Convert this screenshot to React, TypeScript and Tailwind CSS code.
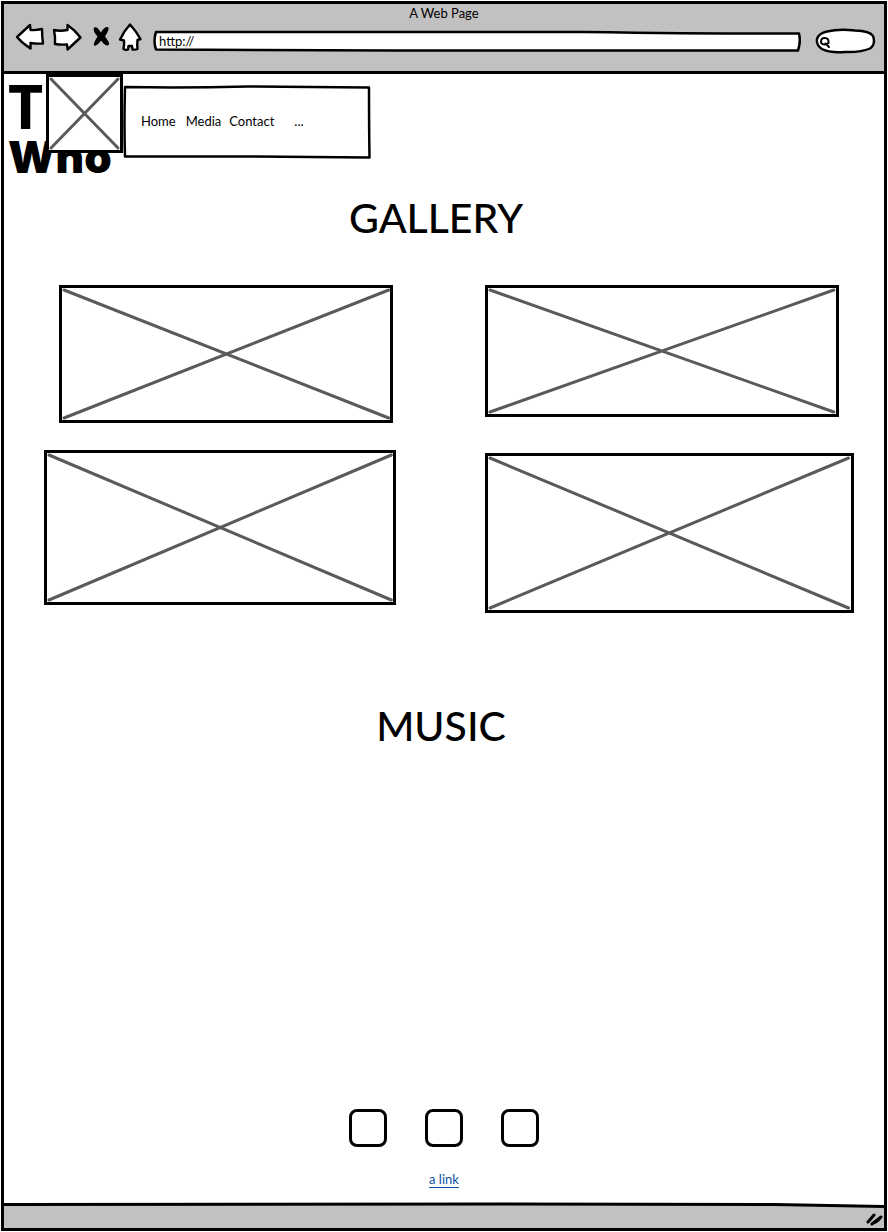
import type { ReactNode } from 'react';

function Sketch({ viewBox, className, children }: { viewBox: string; className: string; children: ReactNode }) {
  return (
    <svg
      viewBox={viewBox}
      className={className}
      fill="white"
      stroke="black"
      strokeWidth="2.4"
      strokeLinejoin="round"
      strokeLinecap="round"
      aria-hidden="true"
    >
      {children}
    </svg>
  );
}

function ImagePlaceholder({ className, label }: { className: string; label: string }) {
  return (
    <div role="img" aria-label={label} className={`border-[3px] border-black bg-white p-0.5 ${className}`}>
      <svg viewBox="0 0 100 100" preserveAspectRatio="none" className="block size-full overflow-visible" aria-hidden="true">
        <path
          d="M0 0 L100 100 M100 0 L0 100"
          stroke="#5a5a5a"
          strokeWidth="3"
          strokeLinecap="round"
          fill="none"
          vectorEffect="non-scaling-stroke"
        />
      </svg>
    </div>
  );
}

function BrowserBar() {
  return (
    <header className="h-[70px] shrink-0 border-b-[3px] border-black bg-[#c1c1c1]">
      <p className="text-center text-[13px] leading-[19px]">A Web Page</p>
      <div className="flex items-start pr-2 pl-3">
        <div className="flex shrink-0 items-center gap-2">
          <button type="button" aria-label="Back" className="h-7 w-7">
            <Sketch viewBox="0 0 28 28" className="h-7 w-7 overflow-visible">
              <path d="M1 14 L14 2 L14.500 7 Q20 7.500 26 6 Q26 12 27 20.500 Q20 21 14.500 20 L14.500 25.500 Q6 20 1 14 Z" />
            </Sketch>
          </button>
          <button type="button" aria-label="Forward" className="h-7 w-7">
            <Sketch viewBox="0 0 28 28" className="h-7 w-7 overflow-visible">
              <path d="M2 7 Q8 8.500 15.500 7 L15.500 2 Q23 7 28.500 14.500 L15.500 26.500 L15 21.500 Q9 22 3 21 Q3.500 14 2 7 Z" />
            </Sketch>
          </button>
          <button type="button" aria-label="Stop" className="h-7 w-6">
            <Sketch viewBox="0 0 24 28" className="h-7 w-6 overflow-visible">
              <path stroke="none" fill="black" d="M6 4.500 Q9 3 13 9.500 Q16 3.500 20 4 Q22 6 17 13.500 Q22 20 21 21.500 Q18 24.500 13 17.500 Q9 23.500 6 22.500 Q5 20.500 9.500 13.500 Q4.500 8 6 4.500 Z" />
            </Sketch>
          </button>
          <button type="button" aria-label="Home" className="h-7 w-6">
            <Sketch viewBox="0 0 24 28" className="h-7 w-6 overflow-visible">
              <path d="M10 1.500 Q16 8 20.500 16 L17.500 17 Q17 22 17.500 26 Q15 27 12.500 26.500 L12 23 H8.500 L8 26.500 Q6 27.500 3.500 26 Q4.500 21 4 17.500 L0 16.500 Q4 8 10 1.500 Z" />
            </Sketch>
          </button>
        </div>
        <div className="relative mt-[7px] ml-[9px] flex h-[22px] min-w-0 grow items-center">
          <svg viewBox="0 0 646 22" preserveAspectRatio="none" className="absolute inset-0 size-full" aria-hidden="true">
            <path
              d="M3 2 Q250 2.500 430 2 Q560 4 644 3.500 Q646 12 643 20.500 L240 20.500 L3 19.500 Q0 11 3 2 Z"
              fill="white"
              stroke="black"
              strokeWidth="2.500"
              strokeLinejoin="round"
            />
          </svg>
          <input
            type="text"
            aria-label="Address"
            defaultValue="http://"
            className="relative w-full bg-transparent px-1.5 text-[13px] leading-5 outline-none"
          />
        </div>
        <div className="relative mt-[5px] ml-3.5 flex h-[26px] w-[61px] shrink-0 items-center">
          <svg viewBox="0 0 61 26" className="absolute inset-0 size-full" aria-hidden="true">
            <path
              d="M12 3.500 Q24 0.500 40 2.500 Q55 3 58 8 Q61 16 55 20.500 Q46 24.500 30 24 Q14 25 7 21 Q1 17 2 11 Q4 5 12 3.500 Z"
              fill="white"
              stroke="black"
              strokeWidth="2.400"
            />
            <path
              d="M6 14 Q6 9.500 10 10 Q14 10 13.500 15 Q10 17.500 7.500 16 Q6 15.500 6 14 M10.500 15.500 L14 19"
              fill="none"
              stroke="black"
              strokeWidth="2"
              strokeLinecap="round"
            />
          </svg>
          <input type="search" aria-label="Search" className="relative ml-4 w-9 bg-transparent text-[13px] outline-none" />
        </div>
      </div>
    </header>
  );
}

function SiteHeader() {
  return (
    <div className="flex h-[104px] items-start">
      <div className="relative w-[119px] shrink-0 pt-1.5 pl-1">
        <h1>
          <span className="block font-['Noto_Sans',sans-serif] text-[61px] leading-[52px] font-bold">The</span>
          <span className="block font-[Inter,sans-serif] text-[44px] leading-[50px] font-black">Who</span>
        </h1>
        <ImagePlaceholder label="Band picture" className="absolute top-0 left-[42px] h-[79px] w-[77px]" />
      </div>
      <nav className="relative mt-[11px] h-[74px] w-[248px] text-[13px] leading-5">
        <svg viewBox="0 0 248 74" preserveAspectRatio="none" className="absolute inset-0 size-full" aria-hidden="true">
          <path
            d="M2 2 Q60 3 125 1.500 L246 2.500 Q246 40 246.500 72.500 L125 71.500 L2 71.500 Q1 40 2 2 Z"
            fill="white"
            stroke="black"
            strokeWidth="2.500"
            strokeLinejoin="round"
          />
        </svg>
        <div className="relative flex px-[18px] pt-[26px]">
          <a href="#home">Home</a>
          <a href="#gallery" className="ml-2.5">Media</a>
          <a href="#contact" className="ml-2">Contact</a>
          <a href="#more" className="ml-5">...</a>
        </div>
      </nav>
    </div>
  );
}

export default function App() {
  return (
    <div className="flex min-h-screen flex-col bg-white p-px font-[Lato,sans-serif] text-black">
      <div className="flex grow flex-col border-[3px] border-black">
        <BrowserBar />
        <main className="flex grow flex-col">
          <SiteHeader />
          <section id="gallery">
            <h2 className="pt-4 pr-4 text-center text-[41px] leading-[48px] font-medium">GALLERY</h2>
            <div className="mt-[43px] flex items-start pr-[30px] pl-10">
              <div className="flex w-[43.500%] flex-col items-end gap-[27px]">
                <ImagePlaceholder label="Gallery picture 1" className="mr-[3px] h-[138px] w-[95%]" />
                <ImagePlaceholder label="Gallery picture 2" className="h-[155px] w-full" />
              </div>
              <div className="ml-auto flex w-[45.500%] flex-col items-start gap-9">
                <ImagePlaceholder label="Gallery picture 3" className="h-[132px] w-[96%]" />
                <ImagePlaceholder label="Gallery picture 4" className="h-[160px] w-full" />
              </div>
            </div>
          </section>
          <section id="music">
            <h2 className="pt-[89px] pr-1.5 text-center text-[41px] leading-[48px] font-medium">MUSIC</h2>
          </section>
          <div id="contact" className="mt-auto flex flex-col items-center pb-[15px]">
            <div className="flex gap-[38px]">
              <button type="button" aria-label="Social link 1" className="size-[38px] rounded-lg border-[3px] border-black" />
              <button type="button" aria-label="Social link 2" className="size-[38px] rounded-lg border-[3px] border-black" />
              <button type="button" aria-label="Social link 3" className="size-[38px] rounded-lg border-[3px] border-black" />
            </div>
            <a href="#link" className="mt-[22px] text-[13px] leading-5 text-[#0b4f9c] underline underline-offset-[3px]">
              a link
            </a>
          </div>
        </main>
        <footer className="relative flex h-6 shrink-0 items-center justify-end bg-[#c1c1c1]">
          <svg viewBox="0 0 880 6" preserveAspectRatio="none" className="absolute -top-0.5 left-0 h-1.5 w-full" aria-hidden="true">
            <path d="M0 0 H880 V4 L770 2 H0 Z" fill="white" />
            <path d="M0 2.500 L500 2 L770 2.500 L880 4.500" fill="none" stroke="black" strokeWidth="2.800" />
          </svg>
          <svg viewBox="0 0 18 14" className="relative mt-1.5 h-3.5 w-[18px]" aria-hidden="true">
            <path d="M2 10 L8 3 M6 12 L15 5 M7 11 Q11 10 14 6" fill="none" stroke="black" strokeWidth="3" strokeLinecap="round" />
          </svg>
        </footer>
      </div>
    </div>
  );
}
